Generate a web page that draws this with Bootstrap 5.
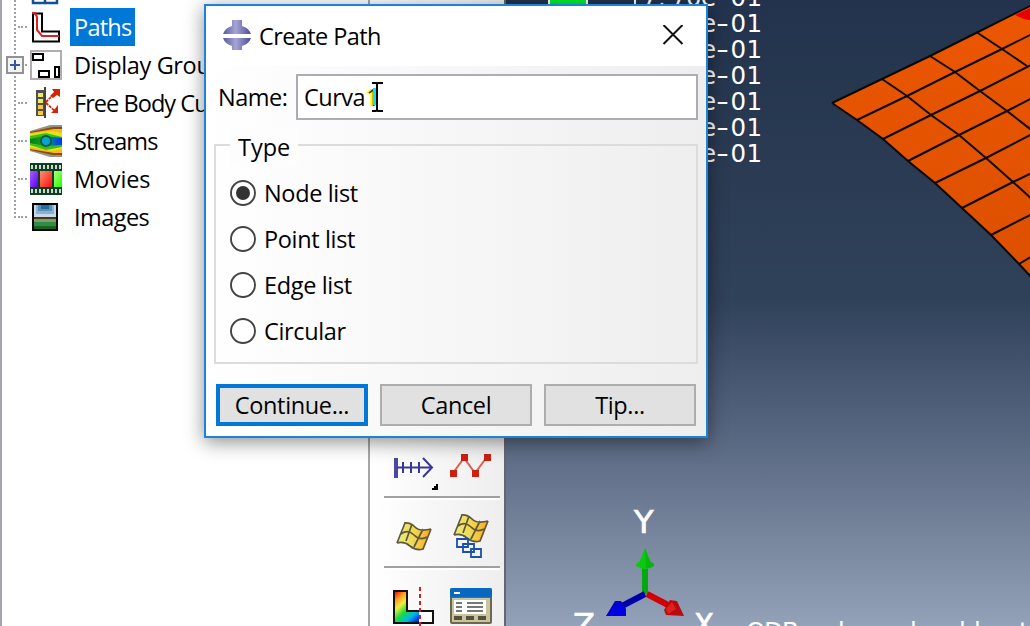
<!DOCTYPE html>
<html lang="en">
<head>
<meta charset="utf-8">
<title>Create Path</title>
<link rel="stylesheet" href="https://cdn.jsdelivr.net/npm/bootstrap@5.3.0/dist/css/bootstrap.min.css">
<script src="https://cdn.jsdelivr.net/npm/bootstrap@5.3.0/dist/js/bootstrap.bundle.min.js"></script>
<style>
body{width:1030px;height:626px;font-family:"Open Sans","Noto Sans",sans-serif;font-size:23.5px;line-height:38px;color:#000;background:#fff}
svg{display:block;flex:none}
.tree{width:370px;border-left:2px solid #a5a3ac;border-right:2px solid #a5a5aa}
.tree-list{margin-top:-30px}
.tree-list::before{content:"";position:absolute;left:12px;top:30px;height:218px;border-left:2px dotted #a0a0a0}
.tree-row{height:38px;padding-left:28px;white-space:nowrap}
.tree-row::before{content:"";position:absolute;left:16px;top:18px;width:9px;border-top:2px dotted #a0a0a0}
.tree-row span{margin-left:8px;padding:0 4px}
.chosen{background:#0078d7;color:#fff}
.expander{position:absolute;left:4px;top:10px;width:18px;height:18px}
.ls1{letter-spacing:-.35px}.ls2{letter-spacing:-.55px}.ls3{letter-spacing:-.75px}
.tools{width:134px;padding:0 4px 0 14px;background:linear-gradient(90deg,#fff,#eee)}
.rule{width:116px;height:4px;background:#fff;border-top:2px solid #a0a0a0}
.view{border-left:2px solid #66676c}
.dialog-win{left:204px;top:4px;width:504px;height:434px;border:2px solid #1c83d8;background:#fff;box-shadow:0 4px 18px rgba(0,0,0,.45)}
.title-bar{height:60px;padding:0 21px 0 16px}
.dialog-main{height:370px;background:linear-gradient(90deg,#fff,#eee);padding:8px 8px 0}
.name-field{width:402px;height:46px;border:2px solid #abadb3;background:#fff;line-height:42px;padding-left:6px}
.digit{color:#3a3800;text-shadow:-2px 0 #ff0,-1px 0 #ff0;margin-left:1px}
.ibeam{position:absolute;left:74px;top:6px}
.type-box{height:220px;margin-top:24px;border:2px solid #dcdcdc;padding:24px 0 0 14px}
.type-box legend{position:absolute;left:14px;top:-18px;width:68px;height:38px;font-size:inherit;line-height:38px;background:#fdfdfd;padding-left:8px;margin:0}
.option{height:46px;gap:7px}
.dlg-btn{width:152px;height:42px;border:2px solid #adadad;background:#e1e1e1;line-height:38px;padding:0;text-align:center;color:#000}
.dlg-btn.primary-choice{border:4px solid #0078d7;line-height:34px}
.readout{font-family:"DejaVu Sans",sans-serif;font-size:24.5px;fill:#fff}
</style>
</head>
<body class="overflow-hidden position-relative d-flex m-0">
<aside class="tree flex-shrink-0 overflow-hidden">
 <div class="tree-list position-relative">
  <div class="tree-row position-relative d-flex align-items-center">
   <svg width="32" height="32"><path d="M3 3h24v27H3zM15 3v27M3 24h24" fill="#fff" stroke="#164f94" stroke-width="2.5"/></svg></div>
  <div class="tree-row position-relative d-flex align-items-center">
   <svg width="32" height="32"><path d="M3 2.500h9v18h17v10H3z" fill="#fff" stroke="#000" stroke-width="2"/><path d="M2 2h3l2 4v13l5 6h17" fill="none" stroke="#e02020" stroke-width="2"/></svg>
   <span class="chosen" style="letter-spacing:-.75px">Paths</span></div>
  <div class="tree-row position-relative d-flex align-items-center">
   <svg class="expander"><rect x="1" y="1" width="16" height="16" fill="#f3f3f3" stroke="#929292" stroke-width="2"/><path d="M9 4v10M4 9h10" stroke="#3b55a5" stroke-width="2"/></svg>
   <svg width="32" height="32"><rect x="1" y="2" width="30" height="28" fill="#fff" stroke="#b2acad" stroke-width="2"/><path d="M3 5h10v6H3zM9 22h10v6H9zM25 18h4v10h-4z" fill="#fff" stroke="#000" stroke-width="2"/></svg>
   <span class="ls1">Display Groups</span></div>
  <div class="tree-row position-relative d-flex align-items-center">
   <svg width="32" height="32"><path d="M6 3h8v26H6z" fill="#50504a"/><path d="M8 6h5v4H8zM8 12h5v4H8z" fill="#eee86c"/><path d="M8 18h5v4H8zM8 24h5v4H8z" fill="#ffc83c"/><path d="M15 0v31" stroke="#444" stroke-width="2"/><path d="M16 15 27 4M16 16l10 9" stroke="#d42400" stroke-width="1.800" stroke-dasharray="3 1"/><path d="M22 2h8v8l-3-2-4 3-3-2 4-4zM28 18v8h-7l3-3z" fill="#d42400"/></svg>
   <span style="letter-spacing:-.95px">Free Body Cuts</span></div>
  <div class="tree-row position-relative d-flex align-items-center">
   <svg width="32" height="32"><defs><linearGradient id="flow"><stop stop-color="#087c18"/><stop offset=".5" stop-color="#18a818"/><stop offset=".75" stop-color="#0068c0"/><stop offset="1" stop-color="#0030f0"/></linearGradient></defs><path d="M0 6 20 0h12v32H20L0 26z" fill="#94948a"/><path d="M0 7 23 2h9v28h-9L0 25z" fill="#8c4a08"/><path d="M0 8 24 4h8v24h-8L0 24z" fill="#ffb428"/><path d="M0 9 22 6l10 2v16l-10 2L0 22z" fill="#dce818"/><path d="M0 11 16 8l16 4v10l-16 3L0 20z" fill="#38c018"/><path d="M0 14 14 11l18 2v7l-17 1-15-3z" fill="url(#flow)"/><circle cx="16" cy="16" r="5" fill="#08a4cc" stroke="#065a48" stroke-width="2"/></svg>
   <span class="ls3" style="letter-spacing:-.95px">Streams</span></div>
  <div class="tree-row position-relative d-flex align-items-center">
   <svg width="32" height="32"><defs><linearGradient id="m1" x2="1" y2="1"><stop stop-color="#a860ff"/><stop offset="1" stop-color="#5c00f0"/></linearGradient><linearGradient id="m2" x2="1" y2="1"><stop stop-color="#ff9070"/><stop offset="1" stop-color="#f81010"/></linearGradient><linearGradient id="m3" x2="1" y2="1"><stop stop-color="#b0ff80"/><stop offset="1" stop-color="#20ff00"/></linearGradient></defs><path d="M0 0h32v32H0z" fill="#0c4020"/><path d="M1 4h31M1 28h31" stroke="#d0d8d0" stroke-width="4" stroke-dasharray="2 2"/><path d="M0 8h8v16H0z" fill="url(#m1)"/><path d="M10 8h12v16H10z" fill="url(#m2)"/><path d="M24 8h8v16h-8z" fill="url(#m3)"/></svg>
   <span style="letter-spacing:-.2px">Movies</span></div>
  <div class="tree-row position-relative d-flex align-items-center">
   <svg width="32" height="32"><path d="M2 2h26v28H2z"/><path d="M4 4h22v12H4z" fill="#c8d8e8"/><path d="M6 4h18v9H6z" fill="#8cb0d0"/><path d="M8 4h14v6H8z" fill="#5890bc"/><path d="M11 4h8v4h-8z" fill="#246c9c"/><path d="M4 16h22v2H4z" fill="#583018"/><path d="M4 18h22v4H4z" fill="#68a868"/><path d="M4 21h22v4H4z" fill="#388848"/><path d="M4 25h22v3H4z" fill="#106820"/></svg>
   <span class="ls2">Images</span></div>
 </div>
</aside>
<div class="tools flex-shrink-0 d-flex flex-column justify-content-end">
 <div class="d-flex">
  <svg width="58" height="56" viewBox="384 440 58 56"><path d="M394 458h4v20h-4z" fill="#4b48a0"/><path d="M397 467.500h35M403 462v11M411 462v11M419 462v11M423 458l9 9.500-9 9.500" fill="none" stroke="#3a3896" stroke-width="2"/><path d="M432 490v-2h2v-2h2v-2h2v6z"/></svg>
  <svg width="58" height="56" viewBox="442 440 58 56"><path d="m453 473 11-15 11 15 12-16" fill="none" stroke="#dc6050" stroke-width="2"/><path d="M450 470h7v7h-7zM461 454h7v7h-7zM472 470h7v7h-7zM484 454h7v7h-7z" fill="#cc2010"/></svg>
 </div>
 <div class="rule"></div>
 <div class="d-flex">
  <svg width="58" height="66" viewBox="384 500 58 66"><defs><linearGradient id="sheet"><stop stop-color="#e8ee80"/><stop offset=".5" stop-color="#f0d850"/><stop offset="1" stop-color="#ffa820"/></linearGradient><g id="flag"><path d="M9 1q6-1 10 4t16 2q-4 8-4 12l-4 9q-7 0-11-4T1 21l5-9z" fill="url(#sheet)"/><path d="M9 1 1 21M16 2l-6 17M27 7l-9 18M5 12q7-5 13 1t13 2M8 1q6-1 11 4t16 2M1 21q7-2 13 3t13 3l8-20" fill="none" stroke="#60583a" stroke-width="1.700"/></g></defs><use href="#flag" x="396" y="522"/></svg>
  <svg width="58" height="66" viewBox="442 500 58 66"><use href="#flag" x="453" y="514"/><path d="M457 539h11v8h-11zM463 544h11v8h-11zM471 549h10v8h-10z" fill="none" stroke="#1c4fa8" stroke-width="1.800"/></svg>
 </div>
 <div class="rule"></div>
 <div class="d-flex">
  <svg width="58" height="56" viewBox="384 570 58 56"><defs><linearGradient id="hue" gradientUnits="userSpaceOnUse" x1="394" y1="592" x2="419" y2="620"><stop stop-color="#f00"/><stop offset=".2" stop-color="#ff9c20"/><stop offset=".38" stop-color="#e8f040"/><stop offset=".58" stop-color="#20d840"/><stop offset=".8" stop-color="#00b8e8"/><stop offset="1" stop-color="#0020e0"/></linearGradient></defs><path d="M394 591h13v20h12v12h-25z" fill="url(#hue)"/><path d="M419 611h14v11h-14z" fill="#fff"/><path d="M394 591h13v20h26v12h-39z" fill="none" stroke="#111" stroke-width="2"/><path d="M420 587v39" stroke="#d02020" stroke-width="2" stroke-dasharray="4 3"/></svg>
  <svg width="58" height="56" viewBox="442 570 58 56"><rect x="450" y="588" width="42" height="36" rx="2" fill="#6c6850"/><path d="M452 598h38v24h-38z" fill="#cac49c"/><path d="M450 590q0-2 2-2h38q2 0 2 2v7h-42z" fill="#0868c0"/><path d="M454 593h6" stroke="#fff" stroke-width="2"/><path d="M454 600h32v14h-32z" fill="#fff"/><path d="M456 603h6M456 607h6M456 611h6M467 603h16M467 607h16M467 611h16" stroke="#777" stroke-width="1.800"/><path d="M454 616h8v4h-8zM466 616h8v4h-8zM478 616h8v4h-8z" fill="#55513d"/></svg>
 </div>
</div>
<main class="view flex-fill">
 <svg width="524" height="626" viewBox="506 0 524 626">
  <defs>
   <linearGradient id="sky" x2="0" y2="1"><stop stop-color="#23334d"/><stop offset=".28" stop-color="#2a3b53"/><stop offset=".48" stop-color="#30415a"/><stop offset=".6" stop-color="#465570"/><stop offset=".78" stop-color="#68778f"/><stop offset="1" stop-color="#93a2b8"/></linearGradient>
   <linearGradient id="stress" x2="0" y2="1"><stop stop-color="#ec5600"/><stop offset="1" stop-color="#dc5000"/></linearGradient>
  </defs>
  <path d="M506 0h524v626H506z" fill="url(#sky)"/>
  <path d="M548 0h40v5h-40z" fill="#fff"/><path d="M550 0h36v5h-36z" fill="#00ee28"/><path d="M635 0v5" stroke="#fff" stroke-width="2"/>
  <g class="readout">
   <text x="642 658 671 686 701" y="6">7.70e</text><text x="716" y="6" textLength="13" lengthAdjust="spacingAndGlyphs">-</text><text x="730.500 746.500" y="6">01</text>
   <text x="701" y="32">e</text><text x="716" y="32" textLength="13" lengthAdjust="spacingAndGlyphs">-</text><text x="730.500 746.500" y="32">01</text>
   <text x="701" y="58">e</text><text x="716" y="58" textLength="13" lengthAdjust="spacingAndGlyphs">-</text><text x="730.500 746.500" y="58">01</text>
   <text x="701" y="84">e</text><text x="716" y="84" textLength="13" lengthAdjust="spacingAndGlyphs">-</text><text x="730.500 746.500" y="84">01</text>
   <text x="701" y="110">e</text><text x="716" y="110" textLength="13" lengthAdjust="spacingAndGlyphs">-</text><text x="730.500 746.500" y="110">01</text>
   <text x="701" y="136">e</text><text x="716" y="136" textLength="13" lengthAdjust="spacingAndGlyphs">-</text><text x="730.500 746.500" y="136">01</text>
   <text x="701" y="162">e</text><text x="716" y="162" textLength="13" lengthAdjust="spacingAndGlyphs">-</text><text x="730.500 746.500" y="162">01</text>
  </g>
  <path d="m832 103 50-24 48-23 47-23.500L1034 4v276l-15-16-28-29-29-27-27-25-27-22-25-22-26-19z" fill="url(#stress)"/>
  <path d="m1015 15 19-9v15l-10-2z" fill="#e80000"/>
  <g fill="none" stroke="#0c0a08" stroke-width="2">
   <path d="m832 103 50-24 48-23 47-23.500L1034 4M832 103l25 17 26 19 25 22 27 22 27 25 29 27 28 29 15 16"/>
   <path d="m857 120 50-24 48-24 47-23 32-16M883 139l48-24 49-24 47-24 7-4M908 161l51-26 48-24 27-14M935 183l51-25 48-25M962 208l51-26 21-10M991 235l43-22M1019 264l15-9"/>
   <path d="m882 79 25 17 24 19 28 20 27 23 27 24 21 19M930 56l25 16 25 19 27 20 27 21M977 32.500l25 16.500 25 17"/>
  </g>
  <path d="M642 567h6v27h-6z" fill="#05a810"/><path d="m645 548 5 13 4 3v2l-4 2q-5 2-10 0l-4-2v-2l4-3z" fill="#06cc0c"/><path d="m645 548 5 13 4 3v2l-4 2h-4z" fill="#05a80a" opacity=".6"/>
  <path d="m645 594-23 12" stroke="#0000a8" stroke-width="6"/><path d="m606 616 9-15h6l5 8v7z" fill="#0000c8"/><path d="m606 616 11-10h5l4 4v6z" fill="#0000e4"/>
  <path d="m647 594 21 11" stroke="#d40000" stroke-width="6"/><path d="m684 616-18-1-2-5 6-10 7 1z" fill="#b80c0c"/><path d="m666 609 6-7 4 7-8 5z" fill="#e02020"/>
  <g fill="#fff" font-family="DejaVu Sans, sans-serif" font-size="32" stroke="#fff" stroke-width=".7"><text x="634" y="533">Y</text><text x="573" y="635.500">Z</text><text x="694" y="635.500" textLength="20" lengthAdjust="spacingAndGlyphs">X</text></g>
  <text class="readout" y="640" x="746 764 782 799 821 838 856 874 894 910 928 952 959 974 990 1004 1019">ODB: barslcullant</text>
 </svg>
</main>
<section class="dialog-win position-absolute">
 <header class="title-bar d-flex align-items-center">
  <svg width="30" height="32" viewBox="0 0 30 32"><defs><linearGradient id="orb"><stop stop-color="#58589c"/><stop offset=".45" stop-color="#a6a6d4"/><stop offset="1" stop-color="#4c4c98"/></linearGradient></defs><path d="M10 0h10v6q7 2 9 8H1q2-6 9-8zM1 18h28q-2 6-9 8v4H10v-4q-7-2-9-8z" fill="url(#orb)"/></svg>
  <span style="letter-spacing:-.6px;margin-left:7px">Create Path</span>
  <svg class="ms-auto" width="24" height="22" viewBox="0 0 24 22"><path d="M2.500 0l19 19M21.500 0l-19 19" stroke="#111" stroke-width="2"/></svg>
 </header>
 <div class="dialog-main">
  <div class="d-flex justify-content-between align-items-center"><label class="ps-1" style="letter-spacing:-.5px">Name:</label><div class="name-field position-relative"><span style="letter-spacing:-.5px">Curva</span><span class="digit">1</span>
   <svg class="ibeam" width="12" height="30"><path d="M1 6h3v17H1z" fill="#00e8f8"/><path d="M0 1h4l1 1 1-1h5M0 29h4l1-1 1 1h5M5 2v26" fill="none" stroke="#000" stroke-width="2"/></svg></div></div>
  <fieldset class="type-box position-relative"><legend>Type</legend>
   <div class="option d-flex align-items-center"><svg width="27" height="27"><circle cx="13" cy="13" r="12" fill="#fff" stroke="#444" stroke-width="1.900"/><circle cx="13" cy="13" r="7" fill="#333"/></svg><span class="ls1">Node list</span></div>
   <div class="option d-flex align-items-center"><svg width="27" height="27"><circle cx="13" cy="13" r="12" fill="#fff" stroke="#444" stroke-width="1.900"/></svg><span class="ls1">Point list</span></div>
   <div class="option d-flex align-items-center"><svg width="27" height="27"><circle cx="13" cy="13" r="12" fill="#fff" stroke="#444" stroke-width="1.900"/></svg><span class="ls1">Edge list</span></div>
   <div class="option d-flex align-items-center"><svg width="27" height="27"><circle cx="13" cy="13" r="12" fill="#fff" stroke="#444" stroke-width="1.900"/></svg><span class="ls1">Circular</span></div>
  </fieldset>
  <div class="d-flex" style="gap:12px;margin:20px 0 0 2px"><button class="dlg-btn primary-choice ls1">Continue...</button><button class="dlg-btn ls1">Cancel</button><button class="dlg-btn ls1">Tip...</button></div>
 </div>
</section>
</body>
</html>
